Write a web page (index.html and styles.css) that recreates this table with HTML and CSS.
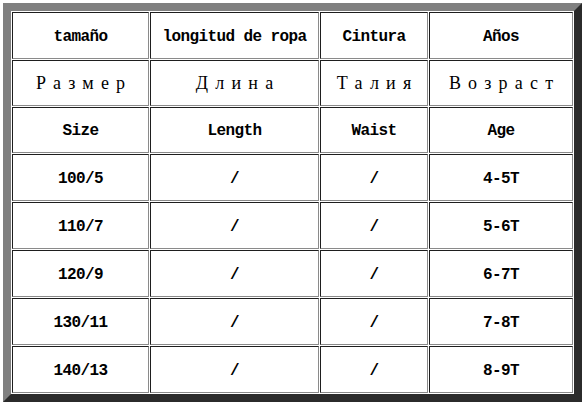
FILE: index.html
```html
<!DOCTYPE html>
<html>
<head>
<meta charset="utf-8">
<link rel="stylesheet" href="styles.css">
</head>
<body>
<table class="sizes">
  <colgroup>
    <col class="c1"><col class="c2"><col class="c3"><col class="c4">
  </colgroup>
  <tr class="tall"><td>tamaño</td><td>longitud de ropa</td><td>Cintura</td><td>Años</td></tr>
  <tr class="short ru"><td>Размер</td><td>Длина</td><td>Талия</td><td>Возраст</td></tr>
  <tr class="short"><td>Size</td><td>Length</td><td>Waist</td><td>Age</td></tr>
  <tr class="tall"><td>100/5</td><td>/</td><td>/</td><td>4-5T</td></tr>
  <tr class="tall"><td>110/7</td><td>/</td><td>/</td><td>5-6T</td></tr>
  <tr class="tall"><td>120/9</td><td>/</td><td>/</td><td>6-7T</td></tr>
  <tr class="tall"><td>130/11</td><td>/</td><td>/</td><td>7-8T</td></tr>
  <tr class="tall"><td>140/13</td><td>/</td><td>/</td><td>8-9T</td></tr>
</table>
</body>
</html>
```
FILE: styles.css
```css
html, body {
  background: #ffffff;
}
body {
  margin: 3px;
}
.sizes {
  border-collapse: separate;
  border-spacing: 1px;
  table-layout: fixed;
  width: 579px;
  border-style: solid;
  border-width: 8px;
  border-color: #808080 #2b2b2b #2b2b2b #808080;
  background: #ffffff;
}
.c1 { width: 137px; }
.c2 { width: 169px; }
.c3 { width: 108px; }
.c4 { width: 144px; }
.sizes td {
  box-sizing: border-box;
  padding: 2px 0 0 0;
  border-style: solid;
  border-width: 1px;
  border-color: #1e1e1e #8a8a8a #8a8a8a #1e1e1e;
  text-align: center;
  vertical-align: middle;
  font-family: "Liberation Mono", monospace;
  font-weight: bold;
  font-size: 16px;
  letter-spacing: -0.6px;
  color: #000000;
  white-space: nowrap;
}
.tall td { height: 47px; }
.short td { height: 46px; }
.ru td {
  font-family: "Liberation Serif", serif;
  font-weight: normal;
  font-size: 18px;
  letter-spacing: 7.2px;
  padding: 0 0 0 7.2px;
}
```
